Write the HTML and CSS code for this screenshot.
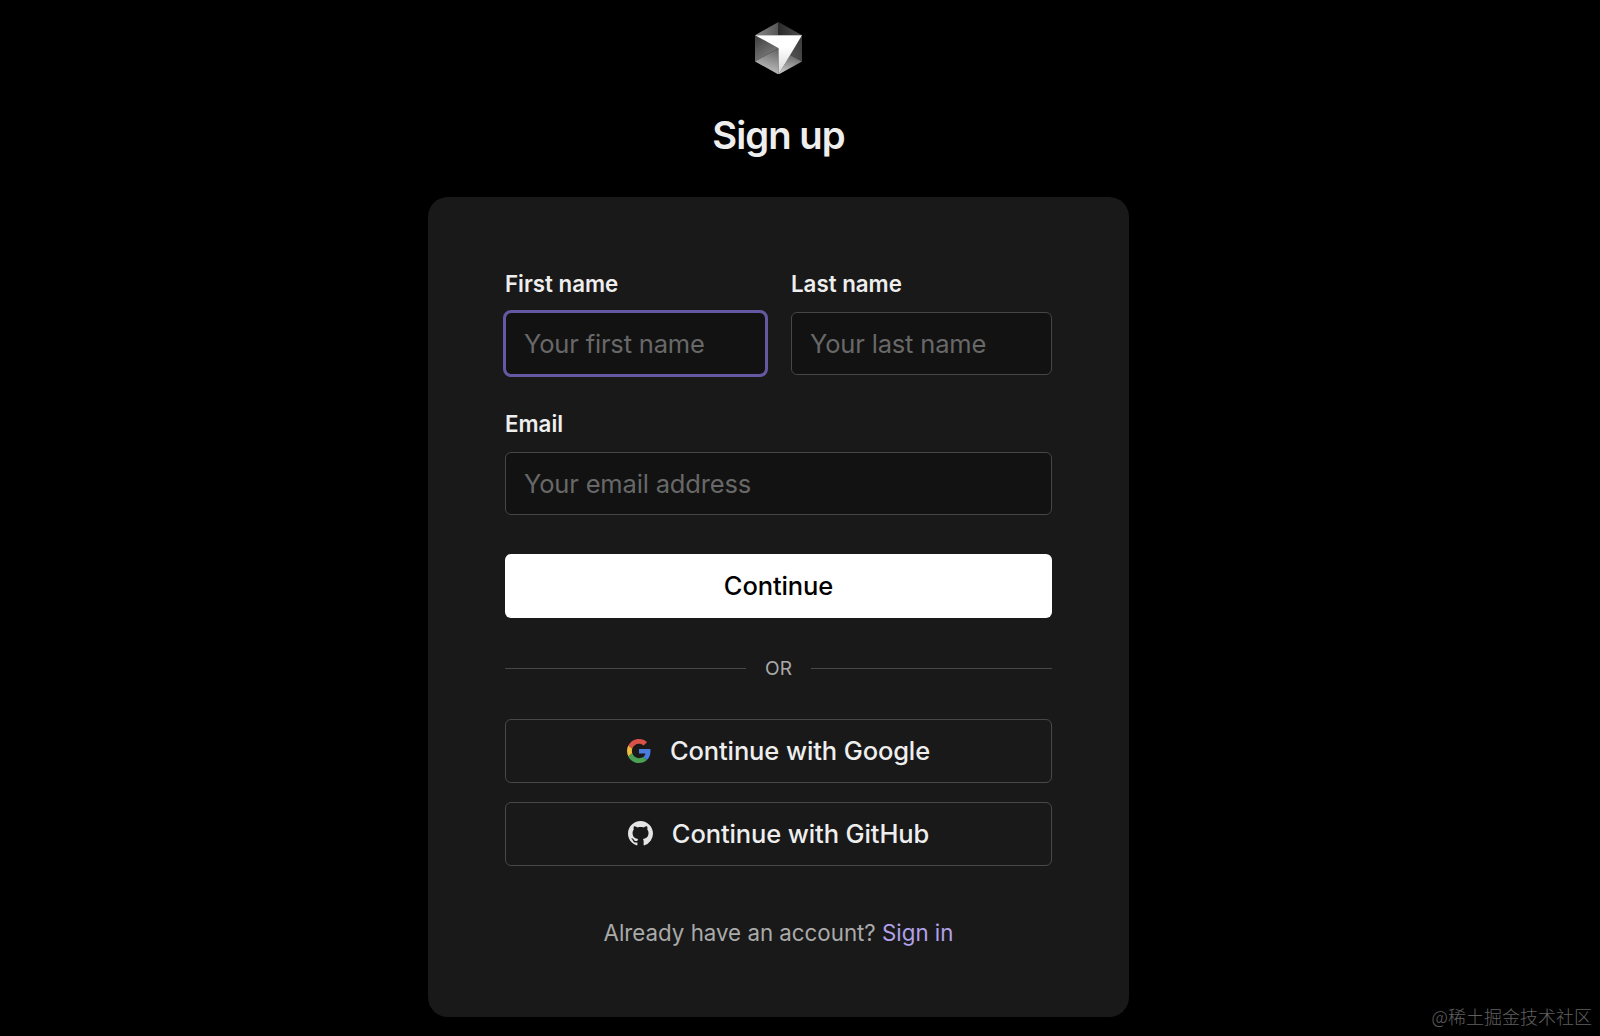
FILE: index.html
```html
<!DOCTYPE html>
<html lang="en">
<head>
<meta charset="utf-8">
<title>Sign up</title>
<link rel="stylesheet" href="styles.css">
</head>
<body>
<main class="page">
  <svg class="logo" viewBox="0 0 46 52" preserveAspectRatio="none" aria-hidden="true">
    <defs>
      <linearGradient id="top-left" x1="0" y1="0" x2="1" y2="0"><stop offset="0" stop-color="#8a8a8a"/><stop offset="1" stop-color="#555"/></linearGradient>
      <linearGradient id="top-right" x1="0" y1="0" x2="1" y2="0"><stop offset="0" stop-color="#2a2a2a"/><stop offset="1" stop-color="#505050"/></linearGradient>
      <linearGradient id="left" x1="0" y1="0" x2="0.6" y2="1"><stop offset="0" stop-color="#3c3c3c"/><stop offset="1" stop-color="#808080"/></linearGradient>
      <linearGradient id="bottom-left" x1="0.7" y1="0" x2="0.4" y2="1"><stop offset="0" stop-color="#686868"/><stop offset="1" stop-color="#c8c8c8"/></linearGradient>
      <linearGradient id="right" x1="0" y1="1" x2="1" y2="0"><stop offset="0" stop-color="#555"/><stop offset="1" stop-color="#3a3a3a"/></linearGradient>
      <linearGradient id="bottom-right" x1="0.6" y1="0" x2="0.3" y2="1"><stop offset="0" stop-color="#666"/><stop offset="1" stop-color="#ccc"/></linearGradient>
      <linearGradient id="front" x1="0" y1="0" x2="0" y2="1"><stop offset="0.3" stop-color="#fff"/><stop offset="1" stop-color="#d6d6d6"/></linearGradient>
    </defs>
    <path fill="url(#top-left)" d="M23 0 0 13h23z"/>
    <path fill="url(#top-right)" d="M23 0v13h23z"/>
    <path fill="url(#left)" d="M0 13v26l23-13z"/>
    <path fill="url(#bottom-left)" d="M0 39l23-13v26z"/>
    <path fill="url(#right)" d="M46 13v26L34.4 32.5z"/>
    <path fill="url(#bottom-right)" d="M34.4 32.5 46 39 23 52z"/>
    <path fill="url(#front)" d="M0 13h46L23 52V26z"/>
  </svg>
  <h1 class="title">Sign up</h1>

  <form class="card">
    <div class="names">
      <label class="field">
        <span class="label">First name</span>
        <input class="input input-focused" type="text" placeholder="Your first name">
      </label>
      <label class="field">
        <span class="label">Last name</span>
        <input class="input" type="text" placeholder="Your last name">
      </label>
    </div>
    <label class="field email">
      <span class="label">Email</span>
      <input class="input" type="email" placeholder="Your email address">
    </label>
    <button class="button primary" type="button">Continue</button>

    <div class="divider"><span>OR</span></div>

    <div class="providers">
      <button class="button outline" type="button">
        <svg class="icon google" viewBox="0 0 48 48" aria-hidden="true">
          <path fill="#d9524a" d="M24 9.5c3.54 0 6.71 1.22 9.21 3.6l6.85-6.85C35.9 2.38 30.47 0 24 0 14.62 0 6.51 5.38 2.56 13.22l7.98 6.19C12.43 13.72 17.74 9.5 24 9.5z"/>
          <path fill="#4a7ddd" d="M46.98 24.55c0-1.57-.15-3.09-.38-4.55H24v9.02h12.94c-.58 2.96-2.26 5.48-4.78 7.18l7.73 6c4.51-4.18 7.09-10.36 7.09-17.65z"/>
          <path fill="#edbb3e" d="M10.53 28.59c-.48-1.45-.76-2.99-.76-4.59s.27-3.14.76-4.59l-7.98-6.19C.92 16.46 0 20.12 0 24c0 3.88.92 7.54 2.56 10.78l7.97-6.19z"/>
          <path fill="#4aa055" d="M24 48c6.48 0 11.93-2.13 15.89-5.81l-7.73-6c-2.15 1.45-4.92 2.3-8.16 2.3-6.26 0-11.57-4.22-13.47-9.91l-7.98 6.19C6.51 42.62 14.62 48 24 48z"/>
        </svg>
        <span>Continue with Google</span>
      </button>
      <button class="button outline" type="button">
        <svg class="icon github" viewBox="0 0 16 16" aria-hidden="true">
          <path fill="#e4e4e4" d="M8 0C3.58 0 0 3.58 0 8c0 3.54 2.29 6.53 5.47 7.59.4.07.55-.17.55-.38 0-.19-.01-.82-.01-1.49-2.01.37-2.53-.49-2.69-.94-.09-.23-.48-.94-.82-1.13-.28-.15-.68-.52-.01-.53.63-.01 1.08.58 1.23.82.72 1.21 1.87.87 2.33.66.07-.52.28-.87.51-1.07-1.78-.2-3.64-.89-3.64-3.95 0-.87.31-1.59.82-2.15-.08-.2-.36-1.02.08-2.12 0 0 .67-.21 2.2.82.64-.18 1.32-.27 2-.27s1.36.09 2 .27c1.53-1.04 2.2-.82 2.2-.82.44 1.1.16 1.92.08 2.12.51.56.82 1.27.82 2.15 0 3.07-1.87 3.75-3.65 3.95.29.25.54.73.54 1.48 0 1.07-.01 1.93-.01 2.2 0 .21.15.46.55.38A8.01 8.01 0 0 0 16 8c0-4.42-3.58-8-8-8z"/>
        </svg>
        <span>Continue with GitHub</span>
      </button>
    </div>

    <p class="signin">Already have an account? <a class="link" href="#">Sign in</a></p>
  </form>
</main>
<div class="watermark">@稀土掘金技术社区</div>
</body>
</html>
```
FILE: styles.css
```css
* {
  box-sizing: border-box;
}

body {
  margin: 0;
  height: 1036px;
  overflow: hidden;
  background: #000;
  color: #eee;
  font-family: Inter, "Liberation Sans", sans-serif;
}

.page {
  display: flex;
  flex-direction: column;
  align-items: center;
  width: 1557px;
  padding-top: 21.5px;
}

.logo {
  width: 47px;
  height: 52.5px;
}

.title {
  margin: 37px 0 0;
  font-size: 38.25px;
  line-height: 48px;
  font-weight: 600;
  letter-spacing: -0.95px;
}

.card {
  display: flex;
  flex-direction: column;
  width: 701px;
  height: 820px;
  margin-top: 38px;
  padding: 70.5px 77px 0;
  border-radius: 20px;
  background: #191919;
}

.names {
  display: grid;
  grid-template-columns: 1fr 1fr;
  gap: 25px;
}

.field {
  display: flex;
  flex-direction: column;
  gap: 12.5px;
}

.label {
  font-size: 22.3px;
  line-height: 32px;
  font-weight: 600;
}

.input {
  width: 100%;
  height: 63px;
  padding: 0 18px 1px;
  border: 1px solid #464646;
  border-radius: 6px;
  outline: none;
  background: #121212;
  color: #eee;
  font: 400 25.5px Inter, "Liberation Sans", sans-serif;
  letter-spacing: -0.17px;
}

.input::placeholder {
  color: #686868;
  opacity: 1;
}

.input-focused {
  outline: 3px solid #6557a1;
  outline-offset: -1px;
}

.email {
  margin-top: 32.5px;
}

.button {
  display: flex;
  align-items: center;
  justify-content: center;
  gap: 19px;
  width: 100%;
  height: 64px;
  padding: 0 0 2px;
  border: 0;
  border-radius: 6px;
  font: 500 25.5px Inter, "Liberation Sans", sans-serif;
}

.primary {
  margin-top: 39px;
  background: #fff;
  color: #000;
  letter-spacing: -0.1px;
}

.divider {
  display: flex;
  align-items: center;
  gap: 19px;
  height: 26px;
  margin-top: 37px;
  color: #aaa;
  font-size: 19.1px;
}

.divider::before,
.divider::after {
  content: "";
  flex: 1;
  height: 1px;
  background: #484848;
}

.providers {
  display: flex;
  flex-direction: column;
  gap: 19px;
  margin-top: 38px;
}

.outline {
  border: 1px solid #484848;
  background: transparent;
  color: #eee;
  letter-spacing: -0.12px;
}

.icon {
  flex: none;
  margin-top: 1px;
}

.google {
  width: 24px;
  height: 24px;
}

.github {
  width: 25px;
  height: 25px;
}

.signin {
  margin: 51px 0 0;
  color: #aaa;
  font-size: 22.3px;
  line-height: 32px;
  text-align: center;
}

.link {
  color: #b1a1e9;
  text-decoration: none;
}

.watermark {
  position: absolute;
  right: 8px;
  bottom: 7px;
  color: #606060;
  font: 300 18px/26px "Noto Sans CJK SC", sans-serif;
}
```
